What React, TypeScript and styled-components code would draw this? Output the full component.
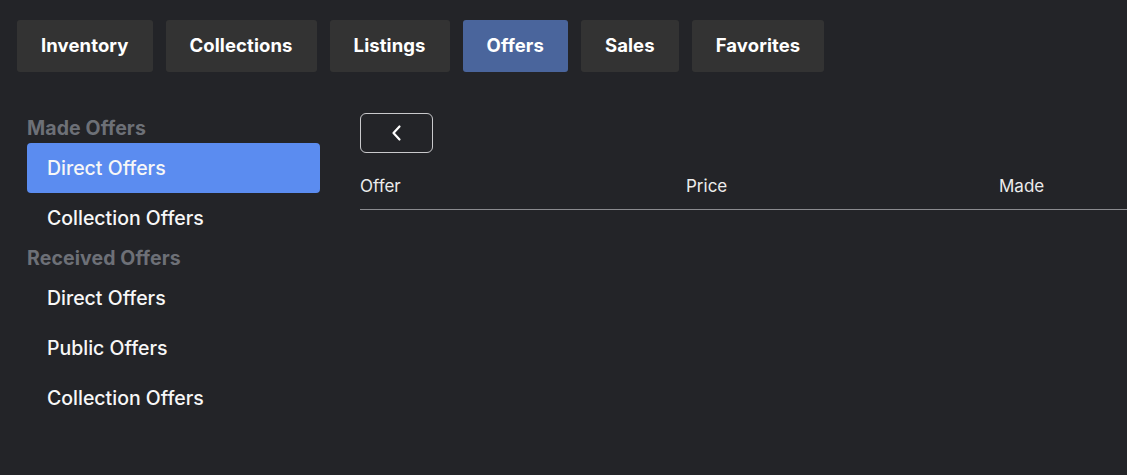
import React from 'react';
import styled, { createGlobalStyle } from 'styled-components';

const GlobalStyle = createGlobalStyle`
  html, body {
    margin: 0;
    padding: 0;
    background: #232428;
    color: #f2f2f2;
    font-family: Inter, "Noto Sans", "Liberation Sans", sans-serif;
    overflow: hidden;
  }
`;

const Page = styled.div`
  width: 1127px;
  height: 475px;
  padding: 20px 0 0 17px;
  box-sizing: border-box;
`;

const TabBar = styled.nav`
  display: flex;
  gap: 13px;
`;

const Tab = styled.button<{ active?: boolean }>`
  height: 52px;
  padding: 0 24px 2px;
  border: none;
  border-radius: 3px;
  background: ${({ active }) => (active ? '#4a659c' : '#333333')};
  color: #ffffff;
  font-family: inherit;
  font-size: 18.5px;
  font-weight: 700;
  letter-spacing: 0.1px;
  cursor: pointer;
`;

const Body = styled.div`
  display: flex;
  gap: 40px;
  margin-top: 41px;
  padding-left: 10px;
`;

const Sidebar = styled.aside`
  width: 293px;
  flex-shrink: 0;
  display: flex;
  flex-direction: column;
`;

const SectionTitle = styled.div`
  height: 30px;
  display: flex;
  align-items: center;
  color: #6d7077;
  font-size: 19.5px;
  font-weight: 700;
  letter-spacing: 0.1px;
`;

const NavItem = styled.div<{ active?: boolean }>`
  height: 50px;
  display: flex;
  align-items: center;
  padding-left: 20px;
  border-radius: 4px;
  background: ${({ active }) => (active ? '#5b8cf0' : 'transparent')};
  color: #f7f7f7;
  font-size: 19.5px;
  font-weight: 500;
`;

const Main = styled.section`
  flex: 1;
  display: flex;
  flex-direction: column;
  min-width: 0;
`;

const BackButton = styled.button`
  width: 73px;
  height: 40px;
  display: flex;
  align-items: center;
  justify-content: center;
  background: transparent;
  border: 1px solid #c9c9cc;
  border-radius: 6px;
  color: #ffffff;
  padding: 0;
  cursor: pointer;
`;

const HeaderRow = styled.div`
  display: grid;
  grid-template-columns: 326px 313px 1fr;
  height: 56px;
  align-items: center;
  border-bottom: 1px solid #8a8b8f;
`;

const HeaderCell = styled.div`
  font-size: 17px;
  font-weight: 400;
  color: #ececec;
  padding-top: 10px;
`;

export default function App() {
  const tabs = ['Inventory', 'Collections', 'Listings', 'Offers', 'Sales', 'Favorites'];
  return (
    <>
      <GlobalStyle />
      <Page>
        <TabBar>
          {tabs.map((t) => (
            <Tab key={t} active={t === 'Offers'}>
              {t}
            </Tab>
          ))}
        </TabBar>
        <Body>
          <Sidebar>
            <SectionTitle>Made Offers</SectionTitle>
            <NavItem active>Direct Offers</NavItem>
            <NavItem>Collection Offers</NavItem>
            <SectionTitle>Received Offers</SectionTitle>
            <NavItem>Direct Offers</NavItem>
            <NavItem>Public Offers</NavItem>
            <NavItem>Collection Offers</NavItem>
          </Sidebar>
          <Main>
            <BackButton aria-label="Back">
              <svg width="24" height="24" viewBox="0 0 24 24" fill="none" stroke="currentColor" strokeWidth="2.2" strokeLinecap="round" strokeLinejoin="round">
                <path d="M14.5 18.5L8.5 12l6-6.5" />
              </svg>
            </BackButton>
            <HeaderRow>
              <HeaderCell>Offer</HeaderCell>
              <HeaderCell>Price</HeaderCell>
              <HeaderCell>Made</HeaderCell>
            </HeaderRow>
          </Main>
        </Body>
      </Page>
    </>
  );
}
